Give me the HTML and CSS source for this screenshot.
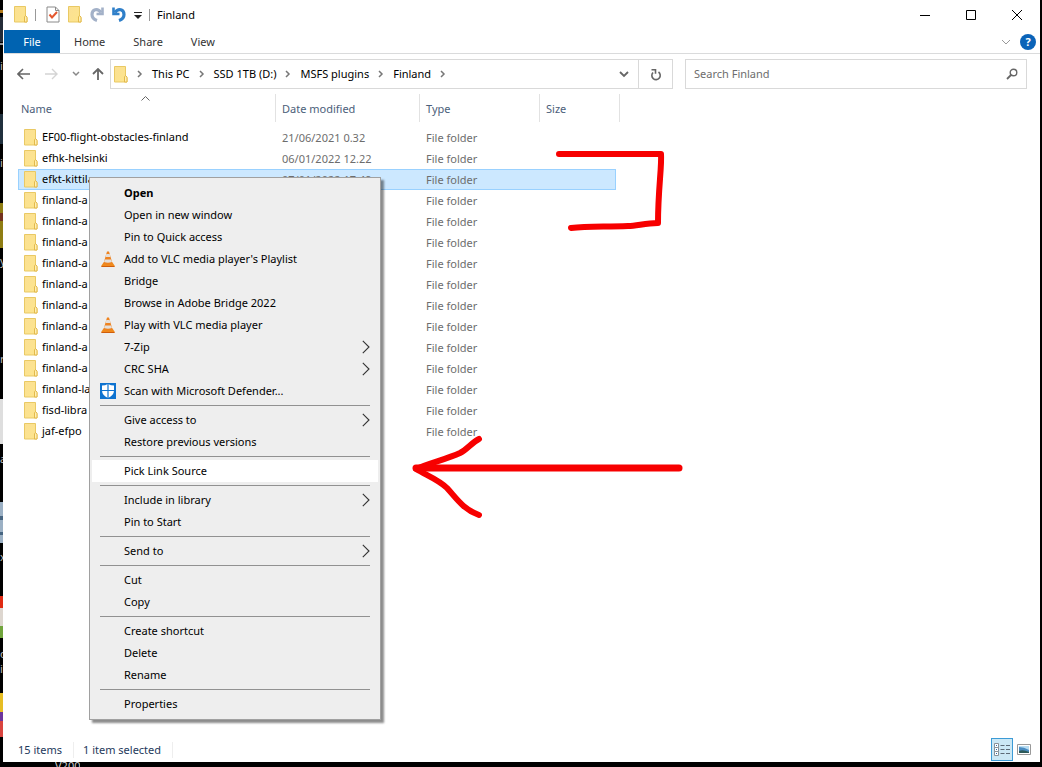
FILE: index.html
```html
<!DOCTYPE html>
<html lang="en">
<head>
<meta charset="utf-8">
<title>Finland</title>
<link rel="stylesheet" href="styles.css">
</head>
<body>
<svg class="defs" aria-hidden="true">
  <defs>
    <linearGradient id="gold" x1="0" y1="0" x2="1" y2="1"><stop offset="0" stop-color="#fbe093"/><stop offset="1" stop-color="#fde58c"/></linearGradient>
    <symbol id="folder" viewBox="0 0 14 17"><path d="M.5.5h11v10l1.500 1v4.500H.5z" fill="url(#gold)" stroke="#e9c964"/><path d="M10.500 16v-5l1-1.500 1.500 1.500v5z" fill="#fff0b4" stroke="#e3b94b"/></symbol>
    <symbol id="crumb" viewBox="0 0 6 8"><path d="M1 1l3 3-3 3" fill="none" stroke="#777" stroke-width="1.500"/></symbol>
    <symbol id="sub" viewBox="0 0 8 14"><path d="M.8.8L7 7 .8 13.200" fill="none" stroke="#333" stroke-width="1.100"/></symbol>
    <symbol id="cone" viewBox="0 0 14 16"><path d="M2.500 11.500L.5 14.500V16h13v-1.500l-2-3z" fill="#f08a1c"/><path d="M6 .5h2l3.500 12q-4.500 2-9 0z" fill="#ee8320"/><path d="M5.300 3h3.400l.8 3h-5zM3.800 8.500h6.400l.7 2.600q-3.900 1.500-7.800 0z" fill="#e3dfdb"/><path d="M.5 15h13v1H.5z" fill="#cf5d0c"/></symbol>
  </defs>
</svg>
<div class="desktop">
  <svg class="wallpaper" viewBox="0 0 4 767" aria-hidden="true">
    <path d="M0 10h4v3H0z" fill="#b17a1b"/><path d="M0 17h4v25H0z" fill="#242c38"/><path d="M0 43h4v2H0z" fill="#8d9399"/><path d="M0 114h4v30H0z" fill="#20303d"/>
    <path d="M0 203h4v45H0z" fill="#8f7d13"/><path d="M0 213h4v8H0z" fill="#74321e"/><path d="M0 399h4v45H0z" fill="#dedede"/><path d="M0 502h4v41H0z" fill="#9bb0c4"/><path d="M0 516h4v4H0zM0 532h4v3H0z" fill="#476581"/>
    <path d="M0 596h4v12H0z" fill="#df2a12"/><path d="M0 608h4v18H0z" fill="#ddd6cf"/><path d="M0 626h4v12H0z" fill="#71a43c"/><path d="M0 693h4v19H0z" fill="#e6bd23"/><path d="M0 712h4v9H0z" fill="#6c359d"/><path d="M0 721h4v16H0z" fill="#d9443f"/>
    <g fill="#bbb" font-family="Noto Sans, sans-serif" font-size="11"><text x="0" y="70">i</text><text x="0" y="167">i</text><text x="0" y="265">y</text><text x="0" y="363">r</text><text x="0" y="463">a</text><text x="0" y="561">x</text><text x="0" y="658">o</text><text x="0" y="673">i</text></g>
  </svg>
  <main class="window">
    <header class="titlebar">
      <svg class="fold" aria-hidden="true"><use href="#folder"/></svg>
      <span class="rule"></span>
      <button aria-label="Properties"><svg width="14" height="17" viewBox="0 0 14 17"><path d="M1 1h8.500L13 4.500V16H1z" fill="#fff" stroke="#8a8a8a"/><path d="M9.500 1v3.500H13" fill="none" stroke="#8a8a8a"/><path d="M3.500 8.500l2.500 3 5-5.500" fill="none" stroke="#e4572e" stroke-width="2"/></svg></button>
      <button aria-label="New folder"><svg class="fold"><use href="#folder"/></svg></button>
      <button aria-label="Redo"><svg width="14" height="15" viewBox="0 0 14 15"><path d="M11 5.500C7.500.5 2 2.500 2 7.500c0 3 2 5 5 6" fill="none" stroke="#a3b1c8" stroke-width="3.200"/><path d="M12.500.5v6.500H6.500" fill="none" stroke="#a3b1c8" stroke-width="2.600"/></svg></button>
      <button aria-label="Undo"><svg width="14" height="15" viewBox="0 0 14 15"><path d="M3 5.500C6.500.5 12 2.500 12 7.500c0 3-2 5-5 6" fill="none" stroke="#2f7fc9" stroke-width="3.200"/><path d="M1.500.5v6.500H7.500" fill="none" stroke="#2f7fc9" stroke-width="2.600"/></svg></button>
      <button aria-label="Customize toolbar"><svg width="8" height="8" viewBox="0 0 8 8"><path d="M0 1.500h8" stroke="#222"/><path d="M0 4h8L4 8z" fill="#222"/></svg></button>
      <span class="rule"></span>
      <h1>Finland</h1>
      <div class="controls">
        <button aria-label="Minimize"><svg width="12" height="12" viewBox="0 0 12 12"><path d="M1 6.500h10"/></svg></button>
        <button aria-label="Maximize"><svg width="12" height="12" viewBox="0 0 12 12"><path d="M1.500 1.500h9v9h-9z"/></svg></button>
        <button aria-label="Close"><svg width="12" height="12" viewBox="0 0 12 12"><path d="M1 1l10 10M11 1L1 11"/></svg></button>
      </div>
    </header>
    <nav class="ribbon">
      <button class="file">File</button><button>Home</button><button>Share</button><button>View</button>
      <button class="expand" aria-label="Expand ribbon"><svg width="10" height="6" viewBox="0 0 10 6"><path d="M1 1l4 4 4-4" fill="none" stroke="#999"/></svg></button>
      <button class="help" aria-label="Help">?</button>
    </nav>
    <div class="nav">
      <div class="arrows">
        <button aria-label="Back"><svg width="13" height="12" viewBox="0 0 13 12"><path d="M13 6H1M6 1L1 6l5 5" fill="none" stroke="#666" stroke-width="1.600"/></svg></button>
        <button aria-label="Forward"><svg width="13" height="12" viewBox="0 0 13 12"><path d="M0 6h12M7 1l5 5-5 5" fill="none" stroke="#d4d4d4" stroke-width="1.400"/></svg></button>
        <button aria-label="Recent"><svg width="8" height="6" viewBox="0 0 8 6"><path d="M1 1l3 3 3-3" fill="none" stroke="#888" stroke-width="1.500"/></svg></button>
        <button aria-label="Up"><svg width="12" height="12" viewBox="0 0 12 12"><path d="M6 12V1M1 6l5-5 5 5" fill="none" stroke="#666" stroke-width="1.800"/></svg></button>
      </div>
      <div class="bars">
        <div class="address">
          <svg class="fold" aria-hidden="true"><use href="#folder"/></svg>
          <svg class="crumb"><use href="#crumb"/></svg><button>This PC</button>
          <svg class="crumb"><use href="#crumb"/></svg><button>SSD 1TB (D:)</button>
          <svg class="crumb"><use href="#crumb"/></svg><button>MSFS plugins</button>
          <svg class="crumb"><use href="#crumb"/></svg><button>Finland</button>
          <svg class="crumb"><use href="#crumb"/></svg>
          <button class="drop" aria-label="Previous locations"><svg width="10" height="7" viewBox="0 0 10 7"><path d="M1 1l4 4 4-4" fill="none" stroke="#666" stroke-width="1.800"/></svg></button>
          <button class="refresh" aria-label="Refresh"><svg width="12" height="13" viewBox="0 0 12 13"><path d="M8.500 4A4.200 4.200 0 1 1 3 4.500M1.500 1.800h4v4" fill="none" stroke="#666" stroke-width="1.600"/></svg></button>
        </div>
        <label class="search"><input type="text" placeholder="Search Finland" aria-label="Search Finland"><svg width="12" height="12" viewBox="0 0 12 12"><circle cx="7.500" cy="4.500" r="3.300" fill="none" stroke="#666" stroke-width="1.400"/><path d="M5 7L1 11" stroke="#666" stroke-width="1.800"/></svg></label>
      </div>
    </div>
    <section class="files">
      <svg class="sort" width="9" height="5" viewBox="0 0 9 5" aria-hidden="true"><path d="M.5 4.500l4-4 4 4" fill="none" stroke="#666"/></svg>
      <table>
        <colgroup><col class="c-name"><col class="c-date"><col class="c-type"><col class="c-size"><col class="c-end"></colgroup>
        <thead><tr><th>Name</th><th>Date modified</th><th>Type</th><th>Size</th><th></th></tr></thead>
        <tbody>
        <tr><td><svg class="fold"><use href="#folder"/></svg>EF00-flight-obstacles-finland</td><td>21/06/2021 0.32</td><td>File folder</td><td></td><td></td></tr>
        <tr><td><svg class="fold"><use href="#folder"/></svg>efhk-helsinki</td><td>06/01/2022 12.22</td><td>File folder</td><td></td><td></td></tr>
        <tr class="selected"><td><svg class="fold"><use href="#folder"/></svg>efkt-kittila</td><td>07/01/2022 17.49</td><td>File folder</td><td></td><td></td></tr>
        <tr><td><svg class="fold"><use href="#folder"/></svg>finland-a</td><td></td><td>File folder</td><td></td><td></td></tr>
        <tr><td><svg class="fold"><use href="#folder"/></svg>finland-a</td><td></td><td>File folder</td><td></td><td></td></tr>
        <tr><td><svg class="fold"><use href="#folder"/></svg>finland-a</td><td></td><td>File folder</td><td></td><td></td></tr>
        <tr><td><svg class="fold"><use href="#folder"/></svg>finland-a</td><td></td><td>File folder</td><td></td><td></td></tr>
        <tr><td><svg class="fold"><use href="#folder"/></svg>finland-a</td><td></td><td>File folder</td><td></td><td></td></tr>
        <tr><td><svg class="fold"><use href="#folder"/></svg>finland-a</td><td></td><td>File folder</td><td></td><td></td></tr>
        <tr><td><svg class="fold"><use href="#folder"/></svg>finland-a</td><td></td><td>File folder</td><td></td><td></td></tr>
        <tr><td><svg class="fold"><use href="#folder"/></svg>finland-a</td><td></td><td>File folder</td><td></td><td></td></tr>
        <tr><td><svg class="fold"><use href="#folder"/></svg>finland-a</td><td></td><td>File folder</td><td></td><td></td></tr>
        <tr><td><svg class="fold"><use href="#folder"/></svg>finland-la</td><td></td><td>File folder</td><td></td><td></td></tr>
        <tr><td><svg class="fold"><use href="#folder"/></svg>fisd-libra</td><td></td><td>File folder</td><td></td><td></td></tr>
        <tr><td><svg class="fold"><use href="#folder"/></svg>jaf-efpo</td><td></td><td>File folder</td><td></td><td></td></tr>
        </tbody>
      </table>
    </section>
    <footer class="status">
      <span>15 items</span><span>1 item selected</span>
      <div class="views">
        <button class="active" aria-label="Details view"><svg width="16" height="14" viewBox="0 0 16 14"><path d="M.5.5h4v4h-4zM.5 4.500h4v4h-4zM.5 8.500h4v4h-4z" fill="#fff" stroke="#8a9299"/><path d="M2 2h1v1H2zM2 6h1v1H2zM2 10h1v1H2z" fill="#2b6ca8"/><path d="M6.500 2.500h4M12 2.500h4M6.500 6.500h4M12 6.500h4M6.500 10.500h4M12 10.500h4" stroke="#5d6a76"/></svg></button>
        <button aria-label="Large icons view"><svg width="14" height="11" viewBox="0 0 14 11"><path d="M.5.5h13v10H.5z" fill="#fff" stroke="#999"/><path d="M2 2h10v7H2z" fill="#4a8cc2"/><path d="M2 3q5 0 10 3V2H2z" fill="#b7dcf2"/><path d="M2 7q4-2 10 1v1H2z" fill="#2d5a59"/></svg></button>
      </div>
    </footer>
  </main>
  <span class="shortcut">V200</span>

  <div class="menu" role="menu">
    <button class="default" role="menuitem">Open</button>
    <button role="menuitem">Open in new window</button>
    <button role="menuitem">Pin to Quick access</button>
    <button role="menuitem"><svg class="cone"><use href="#cone"/></svg>Add to VLC media player's Playlist</button>
    <button role="menuitem">Bridge</button>
    <button role="menuitem">Browse in Adobe Bridge 2022</button>
    <button role="menuitem"><svg class="cone"><use href="#cone"/></svg>Play with VLC media player</button>
    <button role="menuitem">7-Zip<svg class="sub"><use href="#sub"/></svg></button>
    <button role="menuitem">CRC SHA<svg class="sub"><use href="#sub"/></svg></button>
    <button role="menuitem"><svg class="shield" viewBox="0 0 16 16"><path d="M0 0h16v16H0z" fill="#0f73d0"/><path d="M8 1q3 1.500 6 1.500v5Q14 12 8 15 2 12 2 7.500v-5Q5 2.500 8 1z" fill="#fff"/><path d="M8 1v14M2 7.500h12" stroke="#0f73d0" stroke-width="1.200"/></svg>Scan with Microsoft Defender...</button>
    <hr>
    <button role="menuitem">Give access to<svg class="sub"><use href="#sub"/></svg></button>
    <button role="menuitem">Restore previous versions</button>
    <hr>
    <button class="hover" role="menuitem">Pick Link Source</button>
    <hr>
    <button role="menuitem">Include in library<svg class="sub"><use href="#sub"/></svg></button>
    <button role="menuitem">Pin to Start</button>
    <hr>
    <button role="menuitem">Send to<svg class="sub"><use href="#sub"/></svg></button>
    <hr>
    <button role="menuitem">Cut</button>
    <button role="menuitem">Copy</button>
    <hr>
    <button role="menuitem">Create shortcut</button>
    <button role="menuitem">Delete</button>
    <button role="menuitem">Rename</button>
    <hr>
    <button role="menuitem">Properties</button>
  </div>

  <svg class="marks" viewBox="400 140 300 390" aria-hidden="true">
    <g fill="none" stroke="#f70000" stroke-width="6" stroke-linecap="round" stroke-linejoin="round">
      <path d="M559 154H661C662 166 658 190 658 223C645 223 637 226 628 226C605 227 588 226 571 228"/>
      <path d="M679 468H416" stroke-width="7"/>
      <path d="M479 439C471 443 468 449 460 453C447 459 430 463 416 469C428 476 439 480 447 488C457 499 463 509 479 515"/>
    </g>
  </svg>
</div>
</body>
</html>
```
FILE: styles.css
```css
* { box-sizing: border-box; }
body { margin: 0; background: #000; font: 11px/16px "Noto Sans", "Open Sans", sans-serif; color: #111; }
button { font: inherit; color: inherit; background: none; border: 0; padding: 0; display: flex; align-items: center; white-space: nowrap; }
svg { display: block; flex: none; }
.defs { position: absolute; width: 0; height: 0; }
.desktop { position: relative; display: flex; min-height: 100vh; padding: 0 2px 5px 3px; overflow: hidden; }
.wallpaper { position: absolute; left: 0; top: 0; width: 4px; height: 767px; }
.shortcut { position: absolute; left: 55px; top: 758px; height: 9px; overflow: hidden; color: #ccc; z-index: 0; }
.window { position: relative; z-index: 1; flex: 1; min-width: 0; display: flex; flex-direction: column; background: #fff; border-left: 1px solid #fff; }
.fold { width: 14px; height: 17px; }

.titlebar { display: flex; align-items: center; gap: 8px; height: 29px; padding-left: 10px; }
.titlebar h1 { margin: 0; font-size: 11px; font-weight: 400; color: #000; }
.rule { width: 1px; height: 12px; background: #999; }
.titlebar > .rule:first-of-type { margin: 0 2px 0 -1px; }
.titlebar button + .rule { margin-left: -1px; margin-right: -1px; }
.controls { display: flex; margin-left: auto; }
.controls button { width: 46px; height: 28px; justify-content: center; }
.controls path { fill: none; stroke: #000; }

.ribbon { display: flex; align-items: stretch; height: 24px; margin-top: 1px; border-bottom: 1px solid #dadbdc; color: #333; }
.ribbon button { padding: 0 14px; }
.ribbon .file { width: 56px; justify-content: center; background: #0063b1; color: #fff; }
.ribbon .expand { margin-left: auto; padding: 0 9px; }
.ribbon .help { align-self: center; width: 16px; height: 16px; padding: 0; margin-right: 4px; justify-content: center; border-radius: 50%; background: #0a63b8; color: #fff; font-weight: 700; }

.nav { display: flex; align-items: center; padding: 5px 13px; }
.arrows { display: flex; align-items: center; gap: 15px; width: 93px; flex: none; }
.arrows button:nth-child(3) { margin: 0 -3px 0 -1px; }
.bars { flex: 1; display: grid; grid-template-columns: 563fr 342fr; gap: 12px; min-width: 0; }
.address { display: flex; align-items: center; gap: 9px; height: 30px; min-width: 0; padding-left: 3px; border: 1px solid #d9d9d9; color: #000; }
.crumb { width: 6px; height: 8px; }
.address .drop { margin-left: auto; }
.address .refresh { width: 34px; height: 28px; justify-content: center; border-left: 1px solid #d9d9d9; }
.search { display: flex; align-items: center; height: 30px; min-width: 0; padding: 0 8px; border: 1px solid #d9d9d9; }
.search input { flex: 1; min-width: 0; padding: 0; border: 0; outline: 0; font: inherit; }
.search input::placeholder { color: #6d6d6d; opacity: 1; }

.files { position: relative; flex: 1; padding-left: 14px; }
.sort { position: absolute; left: 137px; top: 2px; }
table { table-layout: fixed; width: 602px; border-collapse: separate; border-spacing: 0; }
.c-name { width: 258px; }
.c-date { width: 144px; }
.c-type { width: 120px; }
.c-size { width: 76px; }
.c-end { width: 4px; }
th { height: 28px; padding: 2px 6px 0; text-align: left; font-weight: 400; color: #4c607a; border-right: 1px solid #e2e2e2; }
th:first-child { padding-left: 3px; }
th:nth-child(4) { border-right: 0; }
th:last-child, td:last-child { padding: 0; }
thead::after { content: ""; display: block; height: 5px; }
td { height: 21px; padding: 0 6px; color: #6d6d6d; white-space: nowrap; }
td:first-child { color: #000; }
td .fold { float: left; margin-right: 4px; }
.selected td:not(:last-child) { background: #cce8ff; border: 1px solid #99d1ff; border-width: 1px 0; }
.selected td:first-child { box-shadow: inset 1px 0 #99d1ff; }
.selected td:nth-child(4) { box-shadow: inset -1px 0 #99d1ff; }

.status { display: flex; align-items: center; height: 25px; padding: 0 9px 0 14px; color: #1e395b; }
.status span { padding-right: 11px; margin-right: 9px; border-right: 1px solid #eee; }
.views { display: flex; align-items: center; gap: 4px; margin-left: auto; }
.views .active { width: 22px; height: 23px; justify-content: center; background: #cce8f5; border: 1px solid #3c9bd6; }

.menu { position: absolute; z-index: 2; left: 89px; top: 177px; width: 292px; padding: 4px 2px; background: #eee; border: 1px solid #a0a0a0; box-shadow: 3px 3px 2px rgba(0, 0, 0, .45); color: #000; }
.menu button { position: relative; width: 100%; height: 22px; padding: 0 8px 0 32px; }
.menu .default { font-weight: 700; }
.menu .hover { background: #fff; }
.menu hr { height: 1px; margin: 3px 8px; border: 0; background: #919191; }
.menu .sub { width: 8px; height: 14px; margin-left: auto; }
.cone, .shield { position: absolute; left: 8px; top: 3px; width: 16px; height: 16px; }
.marks { position: absolute; z-index: 3; left: 400px; top: 140px; width: 300px; height: 390px; pointer-events: none; }
```
